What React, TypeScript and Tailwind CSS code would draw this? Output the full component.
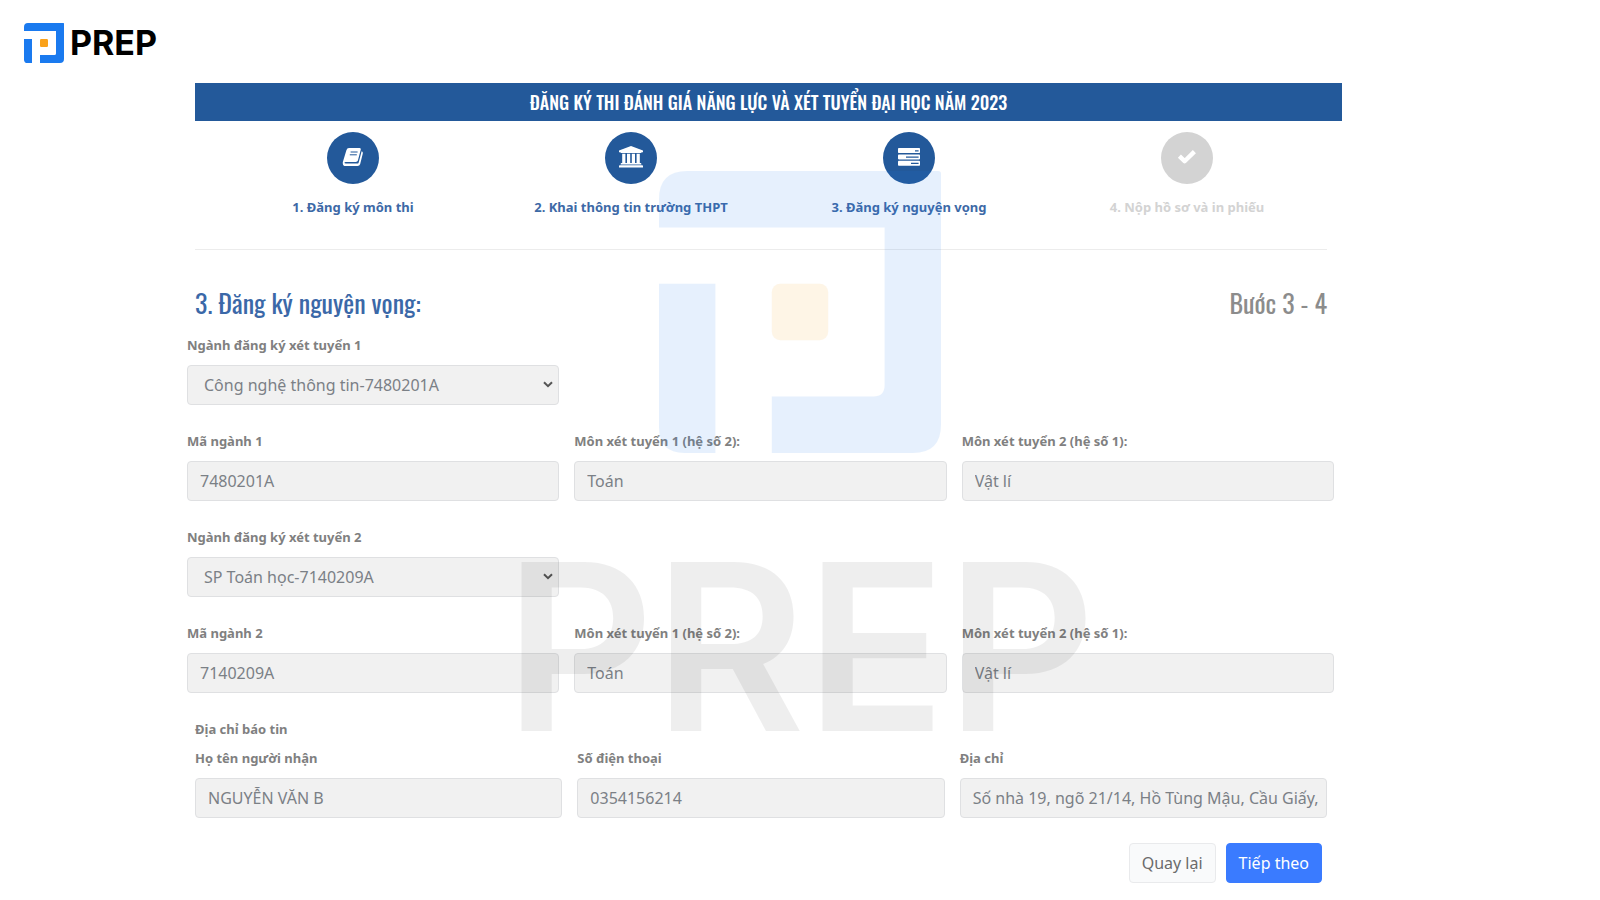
import { useId, useState } from "react";
import type { ReactNode } from "react";

interface FieldProps {
    label: string;
    value: string;
}

interface StepProps {
    label: string;
    icon: ReactNode;
    done: boolean;
}

const LogoMark = ({ className }: { className: string }) => (
    <svg viewBox="0 0 100 100" className={className} aria-hidden="true">
        <path fill="#1a7aef" d="M10 0H99Q100 0 100 1V90Q100 100 90 100H40V80H76Q80 80 80 76V20H0V10Q0 0 10 0Z" />
        <path fill="#1a7aef" d="M0 40H20V100H9Q0 100 0 91Z" />
        <rect fill="#faa21b" x="40" y="40" width="20" height="20" rx="3" />
    </svg>
)

const BookIcon = () => (
    <svg viewBox="0 0 22 20" className="h-5 w-[22px]" aria-hidden="true">
        <path fill="currentColor" d="M7 1H17.6Q19.2 1 18.8 2.6L15.9 13.6Q15.5 15 13.8 15H3.6Q2.6 15 2.4 15.8Q2.4 16.6 3.8 16.6H15.2Q16.3 16.6 16.7 15.4L19.6 4.2Q21.2 4.8 20.8 6.4L18.2 17Q17.6 19 15.6 19H3.6Q1 19 .8 16.4Q.6 15.4 1 14.4L4.4 3.2Q5 1 7 1Z" />
        <path stroke="#23599a" strokeWidth="1" fill="none" d="M8.6 5H15.6M7.8 7.8H14.8" />
    </svg>
)

const SchoolIcon = () => (
    <svg viewBox="0 0 24 22" className="h-[22px] w-6" aria-hidden="true">
        <path fill="currentColor" d="M12 0L24 4.6V6.2H22.6Q22.6 7 21.8 7H2.2Q1.4 7 1.4 6.2H0V4.6ZM3.2 7.8H6.4V17H8V7.8H11.2V17H12.8V7.8H16V17H17.6V7.8H20.8V17H21.6Q22.4 17 22.4 18.4H1.6Q1.6 17 2.4 17H3.2ZM.8 19.2H23.2Q24 19.2 24 20V21.4H0V20Q0 19.2 .8 19.2Z" />
    </svg>
)

const TasksIcon = () => (
    <svg viewBox="0 0 22 18" className="h-[18px] w-[22px]" aria-hidden="true">
        <rect fill="currentColor" width="22" height="5" rx=".8" />
        <rect fill="currentColor" y="6.4" width="22" height="5" rx=".8" />
        <rect fill="currentColor" y="12.8" width="22" height="5" rx=".8" />
        <path stroke="#23599a" strokeWidth="1.2" d="M17 2.8H20.6M8 9.2H20.6M13 15.4H20.6" />
    </svg>
)

const CheckIcon = () => (
    <svg viewBox="0 0 20 16" className="h-4 w-5" aria-hidden="true">
        <path fill="none" stroke="currentColor" strokeWidth="4.4" strokeLinejoin="round" d="M2.4 7.2L7.6 12.2L17.4 2.6" />
    </svg>
)

const steps: StepProps[] = [
    { label: '1. Đăng ký môn thi', icon: <BookIcon />, done: true },
    { label: '2. Khai thông tin trường THPT', icon: <SchoolIcon />, done: true },
    { label: '3. Đăng ký nguyện vọng', icon: <TasksIcon />, done: true },
    { label: '4. Nộp hồ sơ và in phiếu', icon: <CheckIcon />, done: false },
]

const Step = ({ label, icon, done }: StepProps) => (
    <li className="flex flex-col items-center">
        <span className={done
            ? "flex size-[52px] items-center justify-center rounded-full bg-[#23599a] pb-0.5 text-white"
            : "flex size-[52px] items-center justify-center rounded-full bg-[#d3d3d3] pb-0.5 text-white"}>
            {icon}
        </span>
        <span className={done
            ? "mt-[13px] text-[13px] leading-5 font-bold text-[#3d69a6]"
            : "mt-[13px] text-[13px] leading-5 font-bold text-[#d3d3d3]"}>
            {label}
        </span>
    </li>
)

const TextField = ({ label, value }: FieldProps) => {
    const id = useId()

    return (
        <div className="flex min-w-0 flex-col gap-2.5">
            <label htmlFor={id} className="text-[13px] leading-5 font-bold text-[#808080]">{label}</label>
            <input id={id} readOnly defaultValue={value} className="h-10 w-full rounded border border-[#dfe0e2] bg-[#f1f1f1] pr-2 pl-3 text-base text-[#7b8086] outline-none" />
        </div>
    )
}

const SelectField = ({ label, value }: FieldProps) => {
    const id = useId()
    const [selected, setSelected] = useState<string>(value)

    return (
        <div className="flex min-w-0 flex-col gap-2.5">
            <label htmlFor={id} className="text-[13px] leading-5 font-bold text-[#808080]">{label}</label>
            <div className="relative">
                <select id={id} value={selected} onChange={(e) => setSelected(e.target.value)} className="h-10 w-full appearance-none rounded border border-[#dfe0e2] bg-[#f1f1f1] px-4 text-base text-[#7b8086] outline-none">
                    <option>{value}</option>
                </select>
                <svg viewBox="0 0 10 7" className="pointer-events-none absolute top-4 right-1.5 h-[7px] w-2.5" aria-hidden="true">
                    <path d="M1 1.2L5 5.2L9 1.2" fill="none" stroke="#555" strokeWidth="2" />
                </svg>
            </div>
        </div>
    )
}

const Watermark = () => (
    <div className="pointer-events-none absolute inset-x-0 top-[171px] flex flex-col items-center" aria-hidden="true">
        <LogoMark className="size-[282px] opacity-10" />
        <span className="mt-[82px] font-[Inter,sans-serif] text-[232px] leading-[224px] font-semibold text-black/[0.065]">PREP</span>
    </div>
)

const App = () => {
    return (
        <div className="relative min-h-screen bg-white font-['Noto_Sans',sans-serif]">
            <header className="flex items-center gap-1.5 pt-[23px] pl-6">
                <LogoMark className="size-10" />
                <span className="font-[Inter,sans-serif] text-[34px] leading-10 font-bold text-black">PREP</span>
            </header>

            <main className="mt-5 pr-[258px] pb-4 pl-[187px]">
                <h1 className="ml-2 bg-[#23599a] text-center font-[Oswald,sans-serif] text-lg leading-[38px] font-medium text-white">
                    ĐĂNG KÝ THI ĐÁNH GIÁ NĂNG LỰC VÀ XÉT TUYỂN ĐẠI HỌC NĂM 2023
                </h1>

                <ol className="mt-[11px] mr-4 ml-[27px] grid grid-cols-4">
                    {steps.map((step) => <Step key={step.label} {...step} />)}
                </ol>

                <hr className="mt-8 mr-[15px] ml-2 border-[#ececec]" />

                <div className="mt-[35px] mr-[15px] ml-2 flex justify-between font-[Oswald,sans-serif] text-[26px] leading-9">
                    <h2 className="text-[#3b68a8]">3. Đăng ký nguyện vọng:</h2>
                    <p className="text-[#8c8c8c]">Bước 3 - 4</p>
                </div>

                <form className="mt-3.5" onSubmit={(e) => e.preventDefault()}>
                    <div className="mr-2 grid grid-cols-3 gap-x-[15px] gap-y-[26px]">
                        <SelectField label="Ngành đăng ký xét tuyển 1" value="Công nghệ thông tin-7480201A" />
                        <div className="col-span-2" />
                        <TextField label="Mã ngành 1" value="7480201A" />
                        <TextField label="Môn xét tuyển 1 (hệ số 2):" value="Toán" />
                        <TextField label="Môn xét tuyển 2 (hệ số 1):" value="Vật lí" />
                        <SelectField label="Ngành đăng ký xét tuyển 2" value="SP Toán học-7140209A" />
                        <div className="col-span-2" />
                        <TextField label="Mã ngành 2" value="7140209A" />
                        <TextField label="Môn xét tuyển 1 (hệ số 2):" value="Toán" />
                        <TextField label="Môn xét tuyển 2 (hệ số 1):" value="Vật lí" />
                    </div>

                    <fieldset className="mt-[26px] mr-[15px] ml-2">
                        <legend className="text-[13px] leading-5 font-bold text-[#808080]">Địa chỉ báo tin</legend>
                        <div className="mt-[9px] grid grid-cols-3 gap-[15px]">
                            <TextField label="Họ tên người nhận" value="NGUYỄN VĂN B" />
                            <TextField label="Số điện thoại" value="0354156214" />
                            <TextField label="Địa chỉ" value="Số nhà 19, ngõ 21/14, Hồ Tùng Mậu, Cầu Giấy, Hà Nội" />
                        </div>
                    </fieldset>

                    <div className="mt-[25px] mr-5 flex justify-end gap-2.5">
                        <button type="button" className="h-10 rounded border border-[#e9eaec] bg-[#f9fafb] px-3 text-base text-[#6b6b6b]">Quay lại</button>
                        <button type="submit" className="h-10 rounded border border-[#3a7bff] bg-[#3a7bff] px-3 text-base text-white">Tiếp theo</button>
                    </div>
                </form>
            </main>

            <Watermark />
        </div>
    )
}

export default App;
